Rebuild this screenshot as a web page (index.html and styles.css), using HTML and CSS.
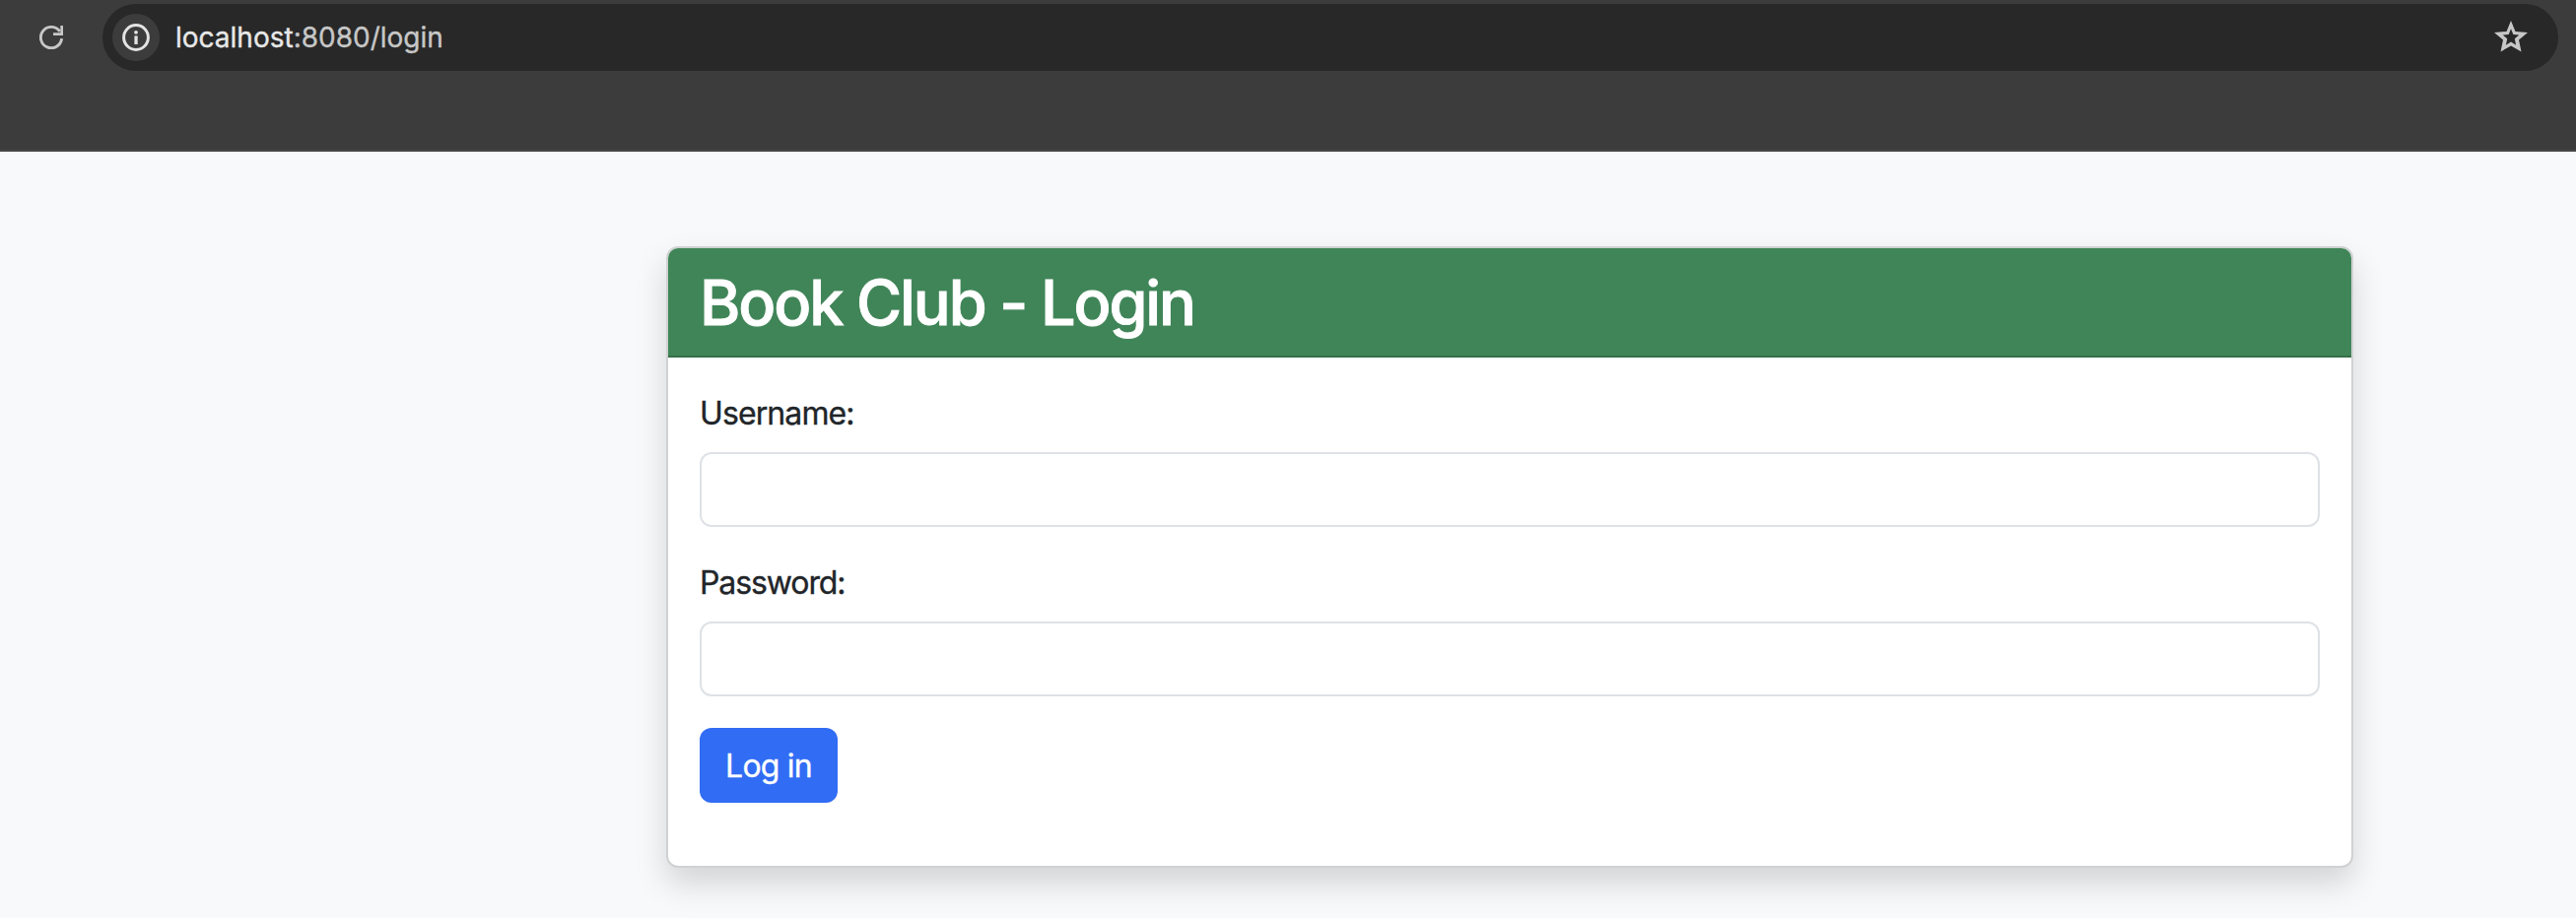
FILE: index.html
```html
<!DOCTYPE html>
<html lang="en">
<head>
<meta charset="utf-8">
<title>Book Club - Login</title>
<link rel="stylesheet" href="styles.css">
</head>
<body>
<header class="toolbar">
  <svg class="reload" viewBox="0 0 24 24" aria-label="Reload"><path d="M20.7 5.9A10.65 10.65 0 1 0 22.6 13.2" fill="none" stroke="#c7c7c7" stroke-width="2.9"/><path d="M21.3 0H24V10H14V7.3H21.3Z" fill="#c7c7c7"/></svg>
  <div class="address">
    <span class="site-info"><svg viewBox="0 0 28 28" aria-label="Site information"><circle cx="14" cy="14" r="12.4" fill="none" stroke="#e3e3e3" stroke-width="3"/><circle cx="14" cy="8.8" r="1.9" fill="#e3e3e3"/><path d="M12.4 12.4H15.7V21H12.4Z" fill="#e3e3e3"/></svg></span>
    <span class="url"><span class="host">localhost</span>:8080/login</span>
    <svg class="star" viewBox="0 0 34 32" aria-label="Bookmark"><path fill="#c7c7c7" fill-rule="evenodd" d="M17 0L21.5 11L34 12L25 19.6L27.5 31.5L17 25.5L6.500 31.500L9 19.600L0 12L12.500 11ZM17 8.200L14.700 13.900L8.700 14.400L13.200 18.200L11.900 24.700L17 21.600L22.100 24.700L20.800 18.200L25.300 14.400L19.300 13.900Z"/></svg>
  </div>
</header>
<main class="page">
  <section class="card">
    <div class="card-header"><h2 class="title">Book Club - Login</h2></div>
    <form class="card-body">
      <div class="field"><label class="label username" for="username">Username:</label><input class="input" id="username" type="text"></div>
      <div class="field"><label class="label password" for="password">Password:</label><input class="input" id="password" type="password"></div>
      <button class="button" type="button">Log in</button>
    </form>
  </section>
</main>
</body>
</html>
```
FILE: styles.css
```css
* { box-sizing: border-box; }
body {
  margin: 0;
  height: 932px;
  overflow: hidden;
  background: #f8f9fb;
  color: #212529;
  font-family: Inter, "Liberation Sans", sans-serif;
  font-size: 32px;
  line-height: 48px;
}
.toolbar {
  display: flex;
  align-items: flex-start;
  height: 154px;
  padding: 4px 18px 0 40px;
  background: #3c3c3c;
  border-bottom: 2px solid #474747;
}
.reload { width: 24px; height: 24px; margin: 22px 40px 0 0; }
.address {
  display: flex;
  flex: 1;
  align-items: center;
  height: 68px;
  padding: 0 31px 0 10px;
  border-radius: 34px;
  background: #282828;
}
.site-info {
  display: grid;
  place-items: center;
  width: 48px;
  height: 48px;
  border-radius: 50%;
  background: #3c3c3c;
}
.site-info svg { width: 28px; height: 28px; }
.url {
  flex: 1;
  margin-left: 16px;
  color: #c7c7c7;
  font-size: 28px;
  -webkit-text-stroke: .35px currentColor;
}
.host { color: #e8e8e8; }
.star { width: 34px; height: 32px; margin-top: -2px; }
.page { padding: 96px 226px 0 676px; }
.card {
  height: 631px;
  border: 2px solid #d0d1d2;
  border-radius: 12px;
  background: #fff;
  box-shadow: 0 16px 32px rgba(0, 0, 0, .15);
}
.card-header {
  height: 111px;
  padding: 17px 32px 15px;
  border-bottom: 2px solid #35704a;
  border-radius: 10px 10px 0 0;
  background: #408558;
  color: #fff;
}
.title {
  margin: 0;
  font-size: 63px;
  font-weight: 500;
  line-height: 77px;
  letter-spacing: -2.1px;
  -webkit-text-stroke: .9px currentColor;
}
.card-body { padding: 32px; }
.field { margin-bottom: 32px; }
.label {
  display: block;
  height: 48px;
  margin-bottom: 16px;
  padding-top: 1px;
  -webkit-text-stroke: .35px currentColor;
}
.username { letter-spacing: -.9px; }
.password { letter-spacing: -1.1px; }
.input {
  display: block;
  width: 100%;
  height: 76px;
  padding: 12px 24px;
  border: 2px solid #dee2e6;
  border-radius: 12px;
  background: #fff;
  font: inherit;
}
.button {
  display: block;
  width: 140px;
  height: 76px;
  padding: 2px 0 0;
  border: 0;
  border-radius: 12px;
  background: #316cf4;
  color: #fff;
  font: inherit;
  letter-spacing: -.8px;
  -webkit-text-stroke: .35px currentColor;
}
```
